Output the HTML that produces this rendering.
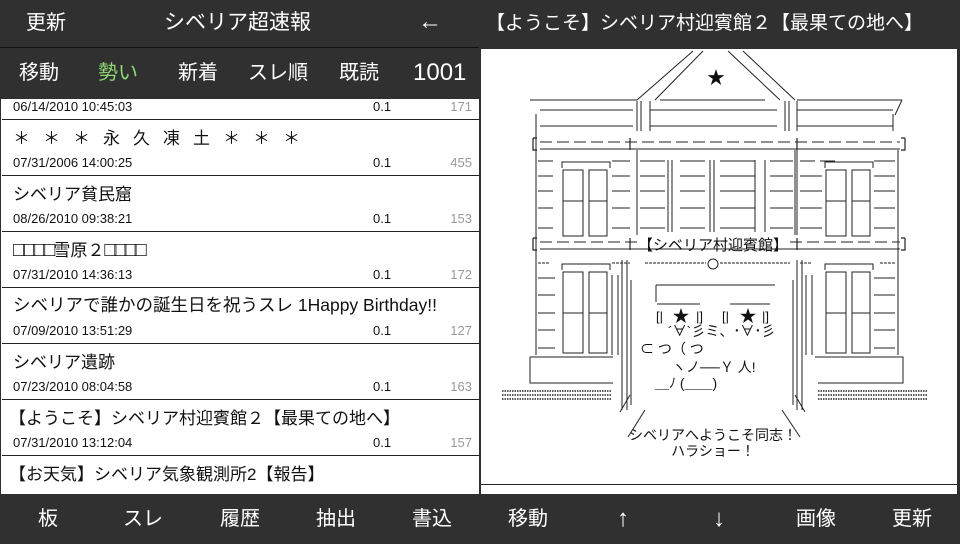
<!DOCTYPE html>
<html><head><meta charset="utf-8"><style>
*{margin:0;padding:0;box-sizing:border-box}
body{width:960px;height:544px;overflow:hidden;background:#2f2f2f;font-family:"Liberation Sans","Noto Sans CJK JP",sans-serif;position:relative}
.bar{position:absolute;background:#303030;color:#fff}
.t{position:absolute;white-space:nowrap;line-height:1}
.row{position:absolute;left:1px;width:478px;height:56px;background:#fff;border-bottom:1px solid #222}
.row .ti{position:absolute;left:11px;top:4px;font-size:17px;color:#111;white-space:nowrap}
.row .d{position:absolute;left:11px;top:35px;font-size:13px;color:#111}
.row .s{position:absolute;left:371px;top:35px;font-size:13px;color:#111}
.row .c{position:absolute;right:8px;top:35px;font-size:13px;color:#999}
.bt{position:absolute;top:509px;font-size:20px;line-height:1;color:#fff;transform:translateX(-50%)}
</style></head><body>
<div class="bar" style="left:0;top:0;width:479px;height:48px;border-bottom:1px solid #111"></div>
<div class="t" style="left:26px;top:13px;font-size:20px;color:#fff">更新</div>
<div class="t" style="left:164px;top:12px;font-size:21px;color:#fff">シベリア超速報</div>
<div class="t" style="left:418px;top:10px;font-size:24px;color:#fff">←</div>
<div class="bar" style="left:0;top:49px;width:479px;height:50px"></div>
<div class="t" style="left:19px;top:63px;font-size:20px;color:#fff">移動</div>
<div class="t" style="left:98px;top:63px;font-size:20px;color:#8fd873">勢い</div>
<div class="t" style="left:178px;top:63px;font-size:20px;color:#fff">新着</div>
<div class="t" style="left:248px;top:63px;font-size:20px;color:#fff">スレ順</div>
<div class="t" style="left:339px;top:63px;font-size:20px;color:#fff">既読</div>
<div class="t" style="left:413px;top:61px;font-size:24px;color:#fff">1001</div>

<div style="position:absolute;left:1px;top:99px;width:478px;height:395px;background:#fff;overflow:hidden">
<div class="row" style="top:-35px"><div class="d">06/14/2010 10:45:03</div><div class="s">0.1</div><div class="c">171</div></div>
<div class="row" style="top:21px"><div class="ti" style="letter-spacing:13px">＊＊＊永久凍土＊＊＊</div><div class="d">07/31/2006 14:00:25</div><div class="s">0.1</div><div class="c">455</div></div>
<div class="row" style="top:77px"><div class="ti">シベリア貧民窟</div><div class="d">08/26/2010 09:38:21</div><div class="s">0.1</div><div class="c">153</div></div>
<div class="row" style="top:133px"><div class="ti"><span style="font-size:20px;letter-spacing:-2px">□□□□</span>雪原２<span style="font-size:20px;letter-spacing:-2px">□□□□</span></div><div class="d">07/31/2010 14:36:13</div><div class="s">0.1</div><div class="c">172</div></div>
<div class="row" style="top:189px"><div class="ti" style="font-size:17.5px">シベリアで誰かの誕生日を祝うスレ 1Happy Birthday!!</div><div class="d">07/09/2010 13:51:29</div><div class="s">0.1</div><div class="c">127</div></div>
<div class="row" style="top:245px"><div class="ti">シベリア遺跡</div><div class="d">07/23/2010 08:04:58</div><div class="s">0.1</div><div class="c">163</div></div>
<div class="row" style="top:301px"><div class="ti" style="left:7px">【ようこそ】シベリア村迎賓館２【最果ての地へ】</div><div class="d">07/31/2010 13:12:04</div><div class="s">0.1</div><div class="c">157</div></div>
<div class="row" style="top:357px"><div class="ti" style="left:7px">【お天気】シベリア気象観測所2【報告】</div></div>
</div>

<div class="bar" style="left:481px;top:0;width:479px;height:48px"></div>
<div class="t" style="left:486px;top:14px;font-size:19px;color:#fff">【ようこそ】シベリア村迎賓館２【最果ての地へ】</div>
<div style="position:absolute;left:481px;top:49px;width:476px;height:445px;background:#fff"></div>
<div style="position:absolute;left:481px;top:484px;width:476px;height:1px;background:#222"></div>

<svg style="position:absolute;left:0;top:0" width="960" height="544" stroke="#222" stroke-width="1" fill="none" font-family="Liberation Sans, Noto Sans CJK JP, sans-serif">
<path d="M693 51L637 100M703 51L655 100M728 51L780 100M743 51L795 100"/>
<text x="716" y="84" font-size="18" fill="#111" stroke="none" text-anchor="middle">★</text>
<path d="M530 100H637M660 100H765M797 100H902M540 110H633M650 110H777M797 110H893M902 100L895 115M540 126H633M650 126H777M797 126H893"/>
<path d="M637 101V131M641 101V131M650 101V131M785 101V131M789 101V131M797 101V131M536 114V355M893 114V131"/>
<path d="M533 138V150H537M533 138H537M905 138V150H901M905 138H901M630 138V150M797 138V150" stroke-width="1.2"/>
<path d="M540 142H900" stroke-dasharray="12 5"/>
<path d="M540 149H900"/>
<path d="M533 238V250H537M533 238H537M905 238V250H901M905 238H901M630 238V250M797 238V250" stroke-width="1.2"/>
<path d="M540 242H640M790 242H900" stroke-dasharray="12 5"/>
<path d="M540 249H900"/>
<text x="713" y="250" font-size="15" fill="#111" stroke="none" text-anchor="middle">【シベリア村迎賓館】</text>
<path d="M898 150V355M637 150V235M797 150V235M795 150V235"/>
<path d="M538 161H553M538 176H553M538 191H553M538 208H553M538 228H553
M612 161H630M612 176H630M612 191H630M612 208H630M612 228H630
M820 161H835M874 161H895M874 176H895M874 191H895M874 208H895M874 228H895M800 161H815M800 176H822M800 191H822M800 208H822M800 228H822
M640 161H665M680 161H705M720 161H755M770 161H793M640 176H665M640 191H665M640 208H665M640 228H665M680 176H705M720 176H755M770 176H793M680 191H705M720 191H755M770 191H793M680 208H705M720 208H755M770 208H793M680 228H705M720 228H755M770 228H793"/>
<path d="M668 160V232M710 160V232M765 160V232M672 160V232M714 160V232M755 160V232"/>
<path d="M562 168V162H610V168M825 168V162H873V168"/>
<path d="M563 170H583V236H563ZM589 170H607V236H589ZM826 170H846V236H826ZM852 170H870V236H852ZM563 201H583M589 201H607M826 201H846M852 201H870"/>
<path d="M538 263H550M612 263H630M800 263H812M880 263H895M645 263H706M720 263H790" stroke-dasharray="3 1"/>
<circle cx="713" cy="264" r="5"/>
<path d="M562 270V264H610V270M825 270V264H873V270"/>
<path d="M563 272H583V353H563ZM589 272H607V353H589ZM826 272H846V353H826ZM852 272H870V353H852ZM563 313H583M589 313H607M826 313H846M852 313H870"/>
<path d="M538 278H555M538 295H555M538 313H555M538 330H555M538 348H555M874 278H895M874 295H895M874 313H895M874 330H895M874 348H895"/>
<path d="M612 275V355M618 275V355M806 275V355M812 275V355M622 260V410M627 260V410M797 260V410M802 260V410M631 280V405M793 280V405"/>
<path d="M530 357H613M530 357V383H613M815 357H903V383H818M903 357V383"/>
<path d="M502 391H612M502 395H612M502 399H612M818 391H928M818 395H928M818 399H928" stroke-dasharray="1.5 1" stroke-width="1.5"/>
<path d="M656 285H775M656 285V302M657 304H700M730 304H770M630 395L620 412M795 395L805 412M645 410L628 437M782 410L800 437"/>
<text x="681" y="322" font-size="17" fill="#111" stroke="none" text-anchor="middle">★</text>
<text x="748" y="322" font-size="17" fill="#111" stroke="none" text-anchor="middle">★</text>
<text x="656" y="321" font-size="13" fill="#111" stroke="none">[|</text>
<text x="696" y="321" font-size="13" fill="#111" stroke="none">|]</text>
<text x="722" y="321" font-size="13" fill="#111" stroke="none">[|</text>
<text x="762" y="321" font-size="13" fill="#111" stroke="none">|]</text>
<text x="668" y="336" font-size="14" fill="#111" stroke="none">´∀`彡ミ、･∀･彡</text>
<text x="640" y="354" font-size="14" fill="#111" stroke="none">⊂    つ（      つ</text>
<text x="672" y="372" font-size="14" fill="#111" stroke="none">ヽノ──Ｙ  人!</text>
<text x="655" y="388" font-size="14" fill="#111" stroke="none">＿ﾉ      (＿＿)</text>
<text x="713" y="440" font-size="14" fill="#111" stroke="none" text-anchor="middle">シベリアへようこそ同志！</text>
<text x="713" y="456" font-size="14" fill="#111" stroke="none" text-anchor="middle">ハラショー！</text>
</svg>

<div class="bar" style="left:0;top:494px;width:960px;height:50px"></div>
<div class="bt" style="left:48px">板</div>
<div class="bt" style="left:143px">スレ</div>
<div class="bt" style="left:240px">履歴</div>
<div class="bt" style="left:336px">抽出</div>
<div class="bt" style="left:432px">書込</div>
<div class="bt" style="left:528px">移動</div>
<div class="bt" style="left:623px;font-size:24px;top:507px">↑</div>
<div class="bt" style="left:719px;font-size:24px;top:507px">↓</div>
<div class="bt" style="left:816px">画像</div>
<div class="bt" style="left:912px">更新</div>
</body></html>
